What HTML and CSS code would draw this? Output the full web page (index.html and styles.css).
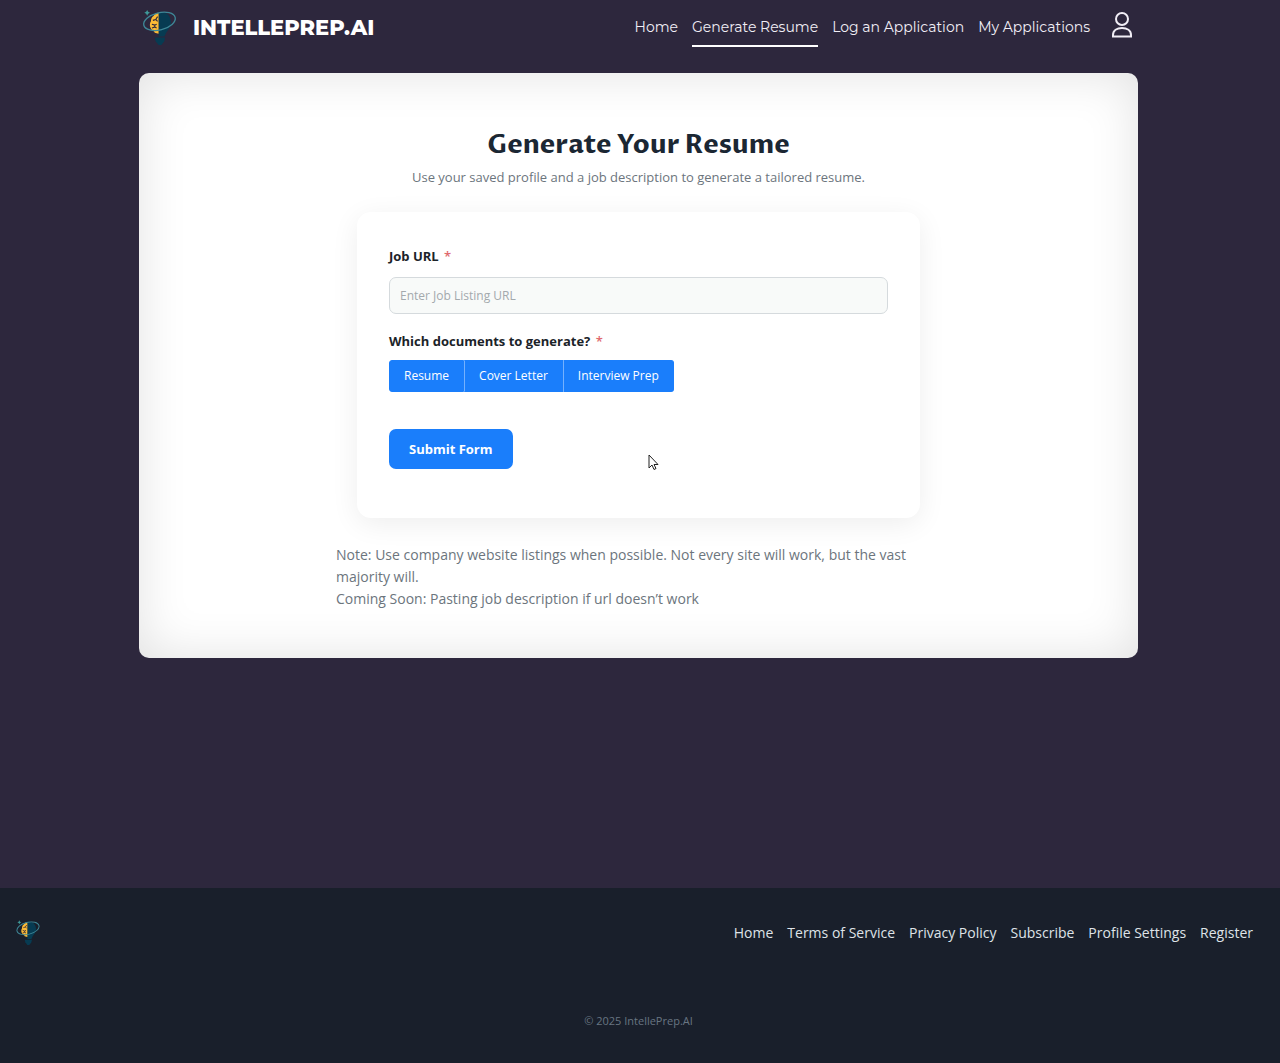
FILE: index.html
```html
<!DOCTYPE html>
<html lang="en">
<head>
<meta charset="utf-8">
<meta name="viewport" content="width=device-width, initial-scale=1">
<title>Generate Resume – IntellePrep.AI</title>
<link rel="stylesheet" href="styles.css">
</head>
<body>
<svg class="sprite" aria-hidden="true">
  <symbol id="logo" viewBox="0 0 36 40">
    <path d="M17 3c9-1 13 5 13 11 0 5-3 8-5 11-1 2-1 3-2 4h-6z" fill="#073b52"/>
    <path d="M13 30h11l-1 4-3 4h-3l-3-4z" fill="#073b52"/>
    <path d="M17 4c-3 0-4 1-5 3-2 1-3 3-3 6-2 3-1 7 1 9 2 1 3 2 3 3l4 1z" fill="#fdbb35"/>
    <path d="M16 8l-2 3-3 1m3-1 2 2m-6 3 3 1 2-1m-2 1v2l-3 1m3-1 2 1" fill="none" stroke="#2d273d" stroke-width="1.2"/>
    <ellipse cx="18" cy="13" rx="17" ry="9" transform="rotate(-14 18 13)" fill="none" stroke="#3e8797" stroke-width="1.400"/>
    <path d="M5 1l1 2 2 1-2 1-1 2-1-2-2-1 2-1z" fill="#3e9a9a"/>
  </symbol>
</svg>

<header class="header">
  <a class="brand" href="#">
    <svg class="brand-logo" aria-hidden="true"><use href="#logo"/></svg>
    <span>INTELLEPREP.AI</span>
  </a>
  <nav class="nav" aria-label="Main">
    <a href="#">Home</a>
    <a class="current" href="#" aria-current="page">Generate Resume</a>
    <a href="#">Log an Application</a>
    <a href="#">My Applications</a>
    <a class="account" href="#" aria-label="Account">
      <svg viewBox="0 0 20 26" aria-hidden="true"><circle cx="10" cy="7" r="6"/><path d="M1 24.500v-1.500C1 18.500 5 16 10 16s9 2.500 9 7v1.500z"/></svg>
    </a>
  </nav>
</header>

<main class="main">
  <section class="panel">
    <h1>Generate Your Resume</h1>
    <p class="lead">Use your saved profile and a job description to generate a tailored resume.</p>
    <form class="card">
      <label class="label" for="job-url">Job URL <span class="star">*</span></label>
      <input class="field" id="job-url" type="url" placeholder="Enter Job Listing URL" required>
      <fieldset class="documents">
        <legend class="label">Which documents to generate? <span class="star">*</span></legend>
        <div class="choices">
          <label class="choice"><input type="checkbox" name="docs" value="resume">Resume</label>
          <label class="choice"><input type="checkbox" name="docs" value="cover">Cover Letter</label>
          <label class="choice"><input type="checkbox" name="docs" value="interview">Interview Prep</label>
        </div>
      </fieldset>
      <button class="submit" type="submit">Submit Form</button>
      <svg class="pointer" viewBox="0 0 11 17" aria-hidden="true"><path d="M1 1v13l3-3 2 4.500 2-1-2-4h4z"/></svg>
    </form>
    <p class="note">Note: Use company website listings when possible. Not every site will work, but the vast majority will.<br>Coming Soon: Pasting job description if url doesn’t work</p>
  </section>
</main>

<footer class="footer">
  <div class="footer-row">
    <a href="#" aria-label="IntellePrep.AI home"><svg class="footer-logo" aria-hidden="true"><use href="#logo"/></svg></a>
    <nav class="footer-nav" aria-label="Footer">
      <a href="#">Home</a>
      <a href="#">Terms of Service</a>
      <a href="#">Privacy Policy</a>
      <a href="#">Subscribe</a>
      <a href="#">Profile Settings</a>
      <a href="#">Register</a>
    </nav>
  </div>
  <p class="copyright">© 2025 IntellePrep.AI</p>
</footer>
</body>
</html>
```
FILE: styles.css
```css
* { box-sizing: border-box; }

body {
  margin: 0;
  min-height: 100vh;
  display: flex;
  flex-direction: column;
  background: #2d273d;
  color: #6c757d;
  font: 14px/22px "Open Sans", sans-serif;
}

h1, p, fieldset { margin: 0; }
a { color: inherit; text-decoration: none; }
.sprite { display: none; }

.header, .main {
  width: 100%;
  max-width: 1002px;
  margin: 0 auto;
  padding-right: 3px;
}

.header {
  display: flex;
  align-items: center;
  justify-content: space-between;
  height: 56px;
  margin-bottom: 17px;
  color: #f1eef6;
  font-family: Montserrat, Inter, sans-serif;
}

.brand {
  display: flex;
  align-items: center;
  gap: 16px;
  padding-left: 3px;
  font-size: 21px;
  font-weight: 800;
  color: #fff;
}
.brand-logo { width: 35px; height: 38px; }

.nav {
  display: flex;
  align-items: center;
  gap: 14px;
  padding-right: 6px;
  font-size: 14px;
  font-weight: 400;
  line-height: 36px;
}
.nav a { border-bottom: 2px solid transparent; }
.nav .current { border-color: #fff; }
.nav .account { display: flex; margin-left: 8px; padding-bottom: 4px; }
.account svg {
  width: 20px;
  height: 26px;
  fill: none;
  stroke: #f1eef6;
  stroke-width: 2;
}

.main { flex: 1; padding-bottom: 40px; }

.panel {
  padding: 55px 24px 48px;
  border-radius: 10px;
  background: #fff;
  box-shadow: inset 0 0 50px rgba(0, 0, 0, 0.12);
}

h1 {
  color: #1b2733;
  font-family: "Proza Libre", "Open Sans", sans-serif;
  font-size: 26px;
  font-weight: 700;
  line-height: 34px;
  text-align: center;
}

.lead {
  margin-top: 4px;
  font-size: 13px;
  text-align: center;
}

.card {
  position: relative;
  max-width: 563px;
  margin: 24px auto 26px;
  padding: 32px 32px 48px;
  border-radius: 14px;
  background: #fff;
  box-shadow: 0 6px 28px rgba(0, 0, 0, 0.07);
}

.label {
  display: block;
  padding: 0;
  color: #1b2329;
  font-size: 13px;
  font-weight: 700;
  line-height: 24px;
}
.star { margin-left: 2px; color: #e0696e; font-weight: 600; }

.field {
  display: block;
  width: 100%;
  height: 37px;
  margin: 9px 0 15px;
  padding: 0 10px;
  border: 1px solid #d5dadd;
  border-radius: 7px;
  background: #f8faf9;
  color: #1b2329;
  font: 12px "Open Sans", sans-serif;
}
.field::placeholder { color: #a3a9ad; }

.documents { padding: 0; border: 0; }

.choices { display: flex; margin-top: 7px; }
.choice {
  position: relative;
  padding: 0 14px;
  border: 1px solid #1a7efb;
  background: #1a7efb;
  color: #fff;
  font-size: 12px;
  font-weight: 500;
  line-height: 30px;
}
.choice + .choice { border-left-color: #75b1fd; }
.choice:first-child { border-radius: 3px 0 0 3px; }
.choice:last-child { border-radius: 0 3px 3px 0; }
.choice input {
  position: absolute;
  inset: 0;
  margin: 0;
  opacity: 0;
}

.submit {
  display: block;
  height: 40px;
  margin-top: 37px;
  margin-bottom: 1px;
  padding: 0 20px;
  border: 0;
  border-radius: 7px;
  background: #1a7efb;
  color: #fff;
  font: 700 13px "Open Sans", sans-serif;
}

.pointer {
  position: absolute;
  top: 242px;
  left: 291px;
  width: 11px;
  height: 17px;
  fill: #fff;
  stroke: #222;
}

.note {
  max-width: 605px;
  margin: 0 auto;
}

.footer {
  padding: 27px 24px 31px 16px;
  background: #191f2b;
}
.footer-row {
  display: flex;
  align-items: center;
  justify-content: space-between;
  height: 36px;
}
.footer-logo { display: block; width: 24px; height: 28px; }
.footer-nav {
  display: flex;
  gap: 14px;
  padding-right: 3px;
  color: #dfe3e8;
}
.copyright {
  margin-top: 59px;
  padding-left: 5px;
  color: #687582;
  font-size: 11px;
  text-align: center;
}
```
